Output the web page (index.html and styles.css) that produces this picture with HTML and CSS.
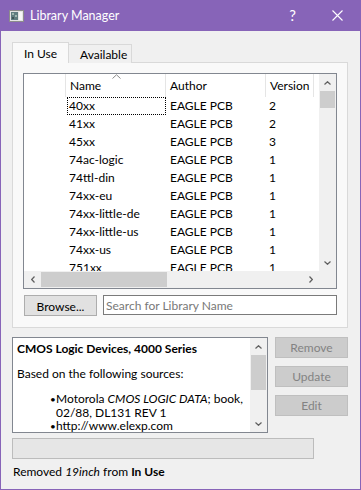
FILE: index.html
```html
<!DOCTYPE html>
<html lang="en">
<head>
  <meta charset="UTF-8" />
  <title>Library Manager</title>
  <link rel="stylesheet" href="styles.css">
</head>
<body>
  <div class="window">
    <div class="titlebar">
      <svg class="app-icon" width="15" height="12" viewBox="0 0 15 12">
        <rect x="0.5" y="0.5" width="14" height="11" fill="#e4e4e4" stroke="#8c8c8c"/>
        <rect x="2" y="2" width="7" height="8" fill="#5f7d80"/>
        <rect x="3" y="3" width="2" height="2" fill="#9fb8b0"/>
        <rect x="6" y="5" width="2" height="2" fill="#9fb8b0"/>
        <rect x="3" y="7" width="2" height="2" fill="#3e5457"/>
        <rect x="10" y="2" width="3" height="8" fill="#f6f6f6"/>
      </svg>
      <span class="title">Library Manager</span>
      <span class="title-btn help">?</span>
      <span class="title-btn">
        <svg width="11" height="11" viewBox="0 0 11 11"><path d="M0.5 0.5 L10.5 10.5 M10.5 0.5 L0.5 10.5" stroke="#fff" stroke-width="1.1"/></svg>
      </span>
    </div>

    <div class="content">
      <div class="tabs">
        <div class="tab active">In Use</div>
        <div class="tab">Available</div>
      </div>

      <div class="pane">
        <div class="table">
          <div class="table-main">
            <div class="viewport">
              <div class="row header">
                <div class="vhead"></div>
                <div class="cell name">Name
                  <svg class="sort" width="9" height="5" viewBox="0 0 9 5"><path d="M0.5 4.5 L4.5 0.8 L8.5 4.5" fill="none" stroke="#8a8a8a"/></svg>
                </div>
                <div class="cell author">Author</div>
                <div class="cell version">Version</div>
              </div>
              <div class="row"><div class="vhead"></div><div class="cell name"><span class="focus">40xx</span></div><div class="cell author">EAGLE PCB</div><div class="cell version">2</div></div>
              <div class="row"><div class="vhead"></div><div class="cell name">41xx</div><div class="cell author">EAGLE PCB</div><div class="cell version">2</div></div>
              <div class="row"><div class="vhead"></div><div class="cell name">45xx</div><div class="cell author">EAGLE PCB</div><div class="cell version">3</div></div>
              <div class="row"><div class="vhead"></div><div class="cell name">74ac-logic</div><div class="cell author">EAGLE PCB</div><div class="cell version">1</div></div>
              <div class="row"><div class="vhead"></div><div class="cell name">74ttl-din</div><div class="cell author">EAGLE PCB</div><div class="cell version">1</div></div>
              <div class="row"><div class="vhead"></div><div class="cell name">74xx-eu</div><div class="cell author">EAGLE PCB</div><div class="cell version">1</div></div>
              <div class="row"><div class="vhead"></div><div class="cell name">74xx-little-de</div><div class="cell author">EAGLE PCB</div><div class="cell version">1</div></div>
              <div class="row"><div class="vhead"></div><div class="cell name">74xx-little-us</div><div class="cell author">EAGLE PCB</div><div class="cell version">1</div></div>
              <div class="row"><div class="vhead"></div><div class="cell name">74xx-us</div><div class="cell author">EAGLE PCB</div><div class="cell version">1</div></div>
              <div class="row"><div class="vhead"></div><div class="cell name">751xx</div><div class="cell author">EAGLE PCB</div><div class="cell version">1</div></div>
            </div>
            <div class="vscroll">
              <div class="arrow"><svg width="7" height="4" viewBox="0 0 7 4"><path d="M0.5 3.5 L3.5 0.7 L6.5 3.5" fill="none" stroke="#606060" stroke-width="1.2"/></svg></div>
              <div class="thumb v-thumb"></div>
              <div class="track"></div>
              <div class="arrow"><svg width="7" height="4" viewBox="0 0 7 4"><path d="M0.5 0.5 L3.5 3.3 L6.5 0.5" fill="none" stroke="#606060" stroke-width="1.2"/></svg></div>
            </div>
          </div>
          <div class="table-foot">
            <div class="hscroll">
              <div class="arrow"><svg width="4" height="7" viewBox="0 0 4 7"><path d="M3.5 0.5 L0.7 3.5 L3.5 6.5" fill="none" stroke="#606060" stroke-width="1.2"/></svg></div>
              <div class="thumb h-thumb"></div>
              <div class="track"></div>
              <div class="arrow"><svg width="4" height="7" viewBox="0 0 4 7"><path d="M0.5 0.5 L3.3 3.5 L0.5 6.5" fill="none" stroke="#606060" stroke-width="1.2"/></svg></div>
            </div>
            <div class="corner"></div>
          </div>
        </div>

        <div class="search-row">
          <button class="btn browse">Browse...</button>
          <input class="search" type="text" placeholder="Search for Library Name" />
        </div>
      </div>

      <div class="lower">
        <div class="desc">
          <div class="desc-text">
            <p><b>CMOS Logic Devices, 4000 Series</b></p>
            <p>Based on the following sources:</p>
            <ul>
              <li>Motorola <i>CMOS LOGIC DATA</i>; book,<br>02/88, DL131 REV 1</li>
              <li>http://www.elexp.com</li>
            </ul>
          </div>
          <div class="vscroll small">
            <div class="arrow"><svg width="7" height="4" viewBox="0 0 7 4"><path d="M0.5 3.5 L3.5 0.7 L6.5 3.5" fill="none" stroke="#606060" stroke-width="1.2"/></svg></div>
            <div class="thumb d-thumb"></div>
            <div class="track"></div>
            <div class="arrow"><svg width="7" height="4" viewBox="0 0 7 4"><path d="M0.5 0.5 L3.5 3.3 L6.5 0.5" fill="none" stroke="#606060" stroke-width="1.2"/></svg></div>
          </div>
        </div>
        <div class="actions">
          <button class="btn disabled">Remove</button>
          <button class="btn disabled">Update</button>
          <button class="btn disabled">Edit</button>
        </div>
      </div>

      <div class="progress"></div>
      <div class="status">Removed <i>19inch</i> from <b>In Use</b></div>
    </div>
  </div>
</body>
</html>
```

FILE: styles.css
```css
body {
  margin: 0;
  font-family: Lato, "Liberation Sans", sans-serif;
  font-size: 12px;
  color: #000;
  background: #f0f0f0;
}
.window {
  width: 361px;
  height: 490px;
  box-sizing: border-box;
  border: 1px solid #8764b8;
  border-top: none;
  background: #f0f0f0;
  overflow: hidden;
}
.titlebar {
  height: 31px;
  background: #8764b8;
  color: #fff;
  display: flex;
  align-items: center;
  padding-left: 8px;
}
.app-icon {
  margin-right: 6px;
  margin-top: 1px;
}
.title {
  flex: 1;
  font-size: 12.5px;
  padding-bottom: 1px;
}
.title-btn {
  width: 45px;
  height: 30px;
  display: flex;
  align-items: center;
  justify-content: center;
}
.title-btn.help {
  font-size: 15px;
  padding-bottom: 2px;
  box-sizing: border-box;
}
.content {
  padding: 11px 12px 0 11px;
}
.tabs {
  display: flex;
  align-items: flex-end;
  height: 21px;
  margin-bottom: -1px;
}
.tab {
  box-sizing: border-box;
  border: 1px solid #d9d9d9;
  border-bottom: none;
  background: #f0f0f0;
  height: 19px;
  padding: 2px 10px 0 11px;
  line-height: 15px;
}
.tab.active {
  position: relative;
  height: 21px;
  width: 57px;
  padding-top: 3px;
  background: #f9f9f9;
  margin-right: -1px;
}
.tab + .tab {
  width: 64px;
}
.pane {
  box-sizing: border-box;
  height: 266px;
  border: 1px solid #d9d9d9;
  background: #f9f9f9;
  padding: 10px;
}
.table {
  height: 216px;
  box-sizing: border-box;
  border: 1px solid #828790;
  background: #fff;
  display: flex;
  flex-direction: column;
}
.table-main {
  display: flex;
  height: 197px;
}
.viewport {
  flex: 1;
  overflow: hidden;
}
.row {
  display: flex;
  height: 18px;
  line-height: 18px;
}
.row.header {
  height: 23px;
  line-height: 23px;
}
.vhead {
  width: 42px;
  flex: none;
  box-sizing: border-box;
}
.cell {
  flex: none;
  box-sizing: border-box;
  padding-left: 3px;
  white-space: nowrap;
  overflow: hidden;
}
.cell.name { width: 100px; }
.cell.author { width: 100px; padding-left: 4px; }
.cell.version { width: 48px; }
.header .vhead,
.header .cell {
  border-right: 1px solid #e5e5e5;
}
.header .cell {
  padding-left: 4px;
  position: relative;
}
.header .cell.author { padding-left: 4px; }
.header .cell.version { padding-left: 4px; }
.header .vhead { width: 42px; }
.sort {
  position: absolute;
  left: 46px;
  top: 0;
}
.focus {
  display: block;
  margin: 0 0 0 -2px;
  padding-left: 1px;
  height: 16px;
  line-height: 16px;
  border: 1px dotted #000;
}
.vscroll {
  width: 17px;
  background: #f0f0f0;
  display: flex;
  flex-direction: column;
  flex: none;
}
.vscroll .arrow {
  height: 17px;
  display: flex;
  align-items: center;
  justify-content: center;
  flex: none;
}
.track {
  flex: 1;
}
.thumb {
  background: #cdcdcd;
  flex: none;
}
.v-thumb {
  height: 17px;
  margin: 0 1px;
}
.table-foot {
  display: flex;
  height: 17px;
}
.hscroll {
  flex: 1;
  display: flex;
  background: #f0f0f0;
}
.hscroll .arrow {
  width: 17px;
  display: flex;
  align-items: center;
  justify-content: center;
}
.h-thumb {
  width: 126px;
  margin: 1px 0;
}
.corner {
  width: 17px;
  background: #f0f0f0;
}
.search-row {
  display: flex;
  margin-top: 6px;
  height: 21px;
}
.btn {
  font-family: inherit;
  font-size: 12px;
  box-sizing: border-box;
  border: 1px solid #adadad;
  background: #e1e1e1;
  color: #000;
  padding: 0;
  height: 21px;
}
.browse {
  width: 73px;
  margin-left: 1px;
  padding-top: 1px;
}
.search {
  margin-left: 6px;
  width: 234px;
  height: 20px;
  box-sizing: border-box;
  border: 1px solid #7a7a7a;
  padding: 0 2px;
  font-family: inherit;
  font-size: 12px;
  outline: none;
}
.search::placeholder {
  color: #787878;
}
.lower {
  display: flex;
  margin-top: 9px;
  gap: 7px;
}
.desc {
  width: 256px;
  height: 96px;
  box-sizing: border-box;
  border: 1px solid #828790;
  background: #fff;
  display: flex;
  overflow: hidden;
}
.desc-text {
  flex: 1;
  padding: 4px 0 0 4px;
  line-height: 13px;
  white-space: nowrap;
  overflow: hidden;
}
.desc-text p {
  margin: 0 0 12px;
}
.desc-text ul {
  list-style: none;
  margin: 0;
  padding-left: 39px;
}
.desc-text li::before {
  content: "\2022";
  display: inline-block;
  width: 6px;
  margin-left: -6px;
  font-size: 10px;
}
.d-thumb {
  height: 35px;
  margin: 0 1px;
}
.actions {
  display: flex;
  flex-direction: column;
  gap: 8px;
}
.btn.disabled {
  width: 73px;
  background: #cccccc;
  border-color: #bfbfbf;
  color: #838383;
}
.progress {
  width: 302px;
  height: 21px;
  box-sizing: border-box;
  margin-top: 5px;
  border: 1px solid #bcbcbc;
  background: #e6e6e6;
}
.status {
  margin-top: 5px;
  line-height: 16px;
  padding-left: 1px;
}
```
